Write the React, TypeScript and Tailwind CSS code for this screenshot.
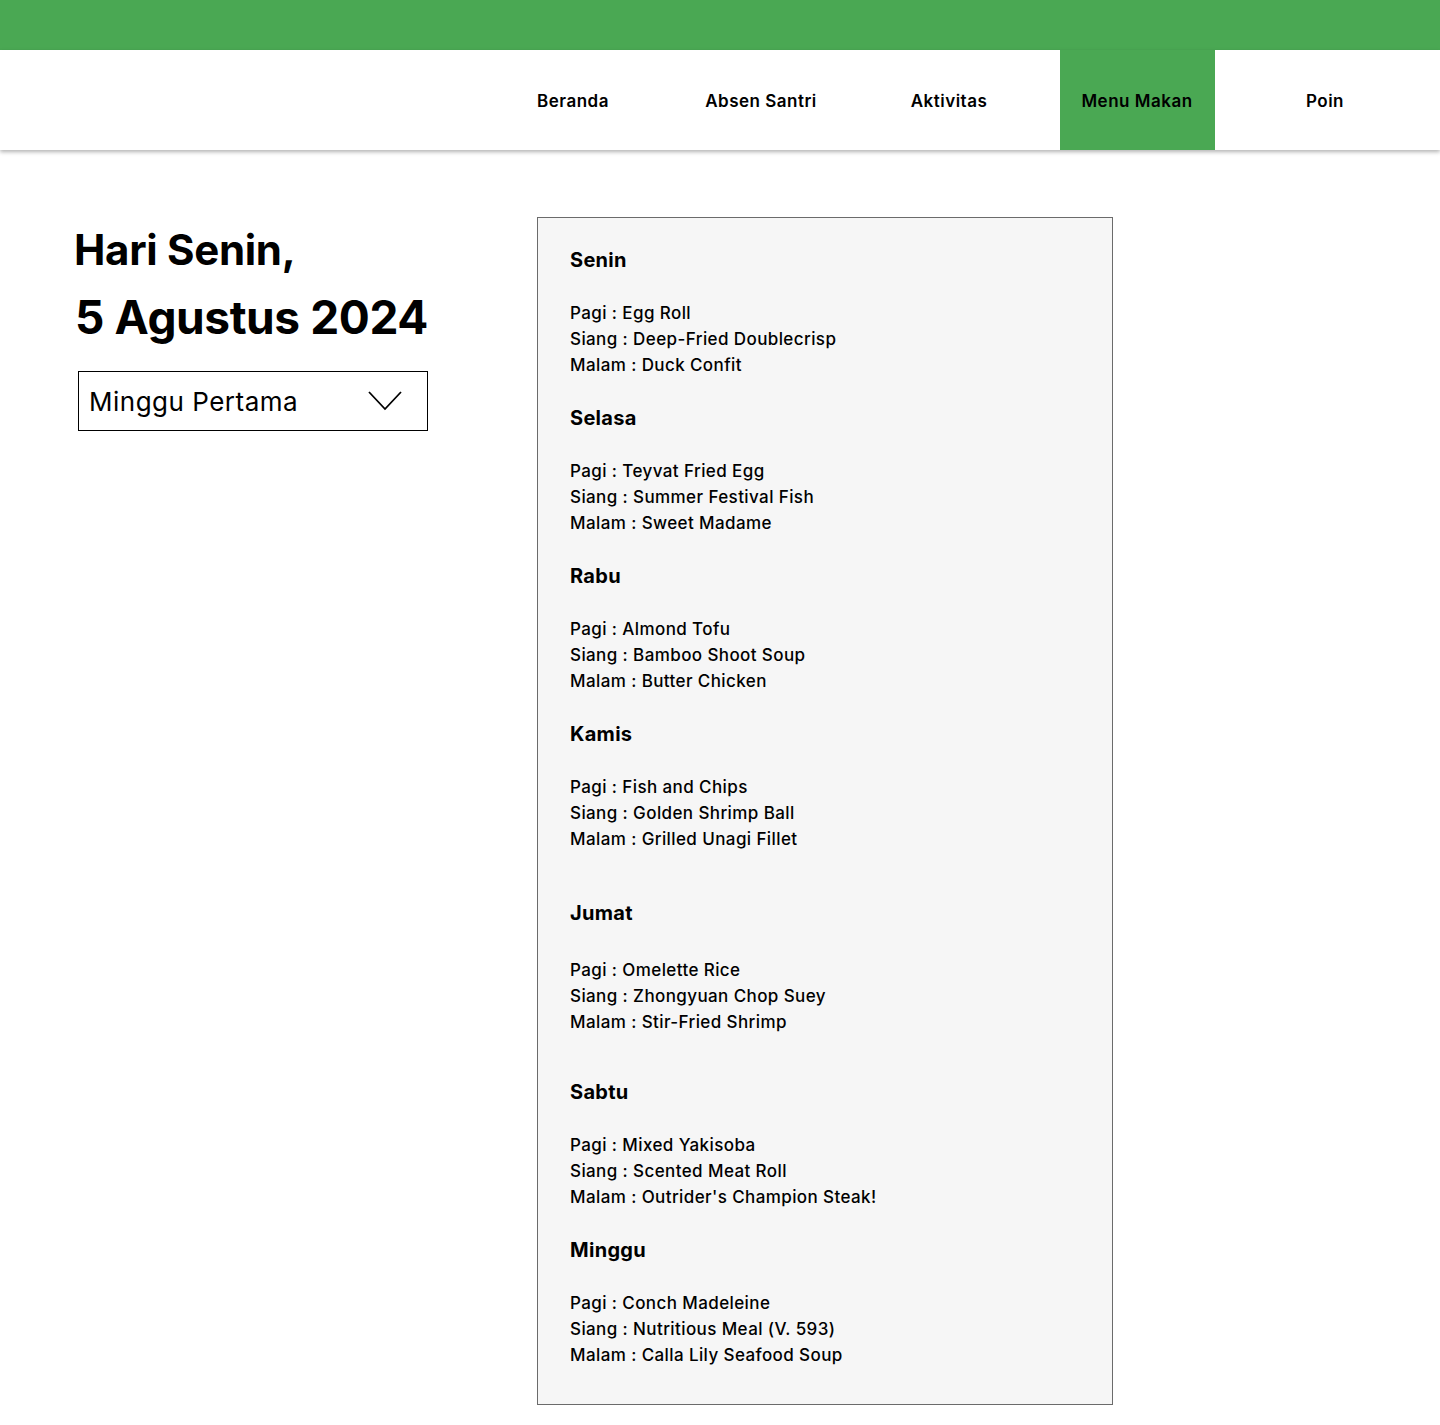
import React from "react";

const days: { name: string; items: [string, string][]; mt: string; gap: string }[] = [
  { name: "Senin", mt: "mt-0", gap: "mt-[27px]", items: [["Pagi", "Egg Roll"], ["Siang", "Deep-Fried Doublecrisp"], ["Malam", "Duck Confit"]] },
  { name: "Selasa", mt: "mt-[27px]", gap: "mt-[27px]", items: [["Pagi", "Teyvat Fried Egg"], ["Siang", "Summer Festival Fish"], ["Malam", "Sweet Madame"]] },
  { name: "Rabu", mt: "mt-[27px]", gap: "mt-[27px]", items: [["Pagi", "Almond Tofu"], ["Siang", "Bamboo Shoot Soup"], ["Malam", "Butter Chicken"]] },
  { name: "Kamis", mt: "mt-[27px]", gap: "mt-[27px]", items: [["Pagi", "Fish and Chips"], ["Siang", "Golden Shrimp Ball"], ["Malam", "Grilled Unagi Fillet"]] },
  { name: "Jumat", mt: "mt-[48px]", gap: "mt-[31px]", items: [["Pagi", "Omelette Rice"], ["Siang", "Zhongyuan Chop Suey"], ["Malam", "Stir-Fried Shrimp"]] },
  { name: "Sabtu", mt: "mt-[44px]", gap: "mt-[27px]", items: [["Pagi", "Mixed Yakisoba"], ["Siang", "Scented Meat Roll"], ["Malam", "Outrider's Champion Steak!"]] },
  { name: "Minggu", mt: "mt-[27px]", gap: "mt-[27px]", items: [["Pagi", "Conch Madeleine"], ["Siang", "Nutritious Meal (V. 593)"], ["Malam", "Calla Lily Seafood Soup"]] },
];

const navItems = ["Beranda", "Absen Santri", "Aktivitas", "Menu Makan", "Poin"];

export default function App() {
  return (
    <div className="min-h-[1425px] bg-white text-black" style={{ fontFamily: "Inter, 'Noto Sans', sans-serif" }}>
      <div className="h-[50px] bg-[#4aa853]" />
      <nav className="relative z-10 flex h-[100px] justify-end bg-white pr-[21px] shadow-[0_2px_4px_rgba(0,0,0,0.3)]">
        {navItems.map((n) => (
          <div key={n} className="flex w-[188px] justify-center">
            <div
              className={`flex h-full w-[155px] items-center justify-center pt-[3px] text-[17px] font-semibold tracking-[0.5px] ${
                n === "Menu Makan" ? "bg-[#4aa853]" : ""
              }`}
            >
              {n}
            </div>
          </div>
        ))}
      </nav>
      <main className="flex pt-[67px] pb-[20px]">
        <div className="w-[537px] pl-[74px]">
          <h1 className="mt-[8px] text-[42px] font-bold leading-[50px] tracking-[-0.3px]">Hari Senin,</h1>
          <h2 className="mt-[14px] text-[46px] font-bold leading-[56px] tracking-[-0.4px] pl-[1px]">5 Agustus 2024</h2>
          <div className="ml-[4px] mt-[26px] flex h-[60px] w-[350px] items-center justify-between border border-black pl-[10px] pr-[25px]">
            <span className="text-[26px] font-normal tracking-[0.5px]">Minggu Pertama</span>
            <svg width="34" height="20" viewBox="0 0 34 20" fill="none">
              <path d="M1 1 L17 18 L33 1" stroke="black" strokeWidth="1.8" />
            </svg>
          </div>
        </div>
        <div className="w-[576px] border border-[#6b6b6b] bg-[#f6f6f6] pl-[32px] pt-[29px] pb-[36px]">
          {days.map((d) => (
            <div key={d.name} className={d.mt}>
              <div className="text-[20px] font-bold leading-[26px] tracking-[0.3px]">{d.name}</div>
              <div className={d.gap}>
                {d.items.map(([k, v]) => (
                  <div key={k} className="text-[17px] font-medium leading-[26px] tracking-[0.4px]">
                    {k} : {v}
                  </div>
                ))}
              </div>
            </div>
          ))}
        </div>
      </main>
    </div>
  );
}
